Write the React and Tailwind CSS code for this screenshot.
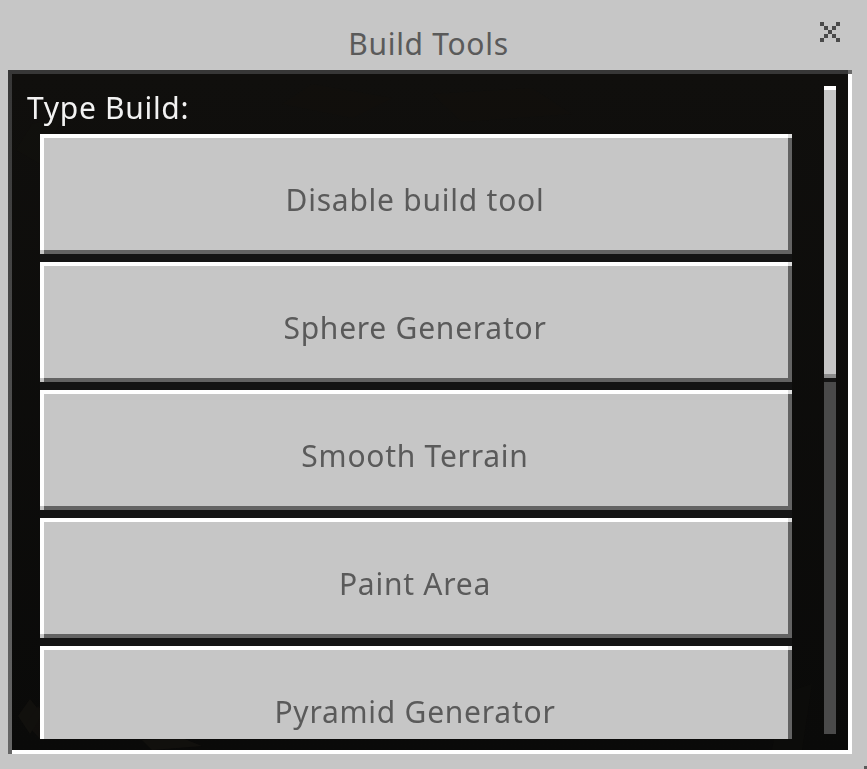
const builds = ["Disable build tool", "Sphere Generator", "Smooth Terrain", "Paint Area", "Pyramid Generator"];

function CloseIcon() {
    const cells = [[0, 0], [4, 0], [1, 1], [3, 1], [2, 2], [1, 3], [3, 3], [0, 4], [4, 4]];
    return (
        <svg width="20" height="20" viewBox="0 0 5 5" shapeRendering="crispEdges" className="block">
            {cells.map(([x, y]) => (
                <rect key={`${x}-${y}`} x={x} y={y} width="1" height="1" fill="#4a4a4a" />
            ))}
        </svg>
    );
}

// faint dirt pattern behind the list
function DirtTexture() {
    return (
        <svg width="836" height="676" viewBox="0 0 836 676" className="absolute inset-0">
            <g fill="#191612" opacity="0.55">
                <polygon points="18,625 30,640 18,660 6,642" />
                <polygon points="34,640 28,665 14,650 26,632" opacity="0.8" />
                <polygon points="130,666 170,664 190,672 140,676" />
                <polygon points="770,620 800,610 790,676 760,676" opacity="0.35" />
                <polygon points="300,10 380,24 340,44 270,30" opacity="0.3" />
                <polygon points="420,20 520,14 560,40 450,48" opacity="0.3" />
                <polygon points="20,50 50,44 28,90 4,76" opacity="0.35" />
            </g>
        </svg>
    );
}

function BuildButton({ label }) {
    return (
        <div className="relative shrink-0 h-[120px] pt-[12px] bg-[#c6c6c6] shadow-[inset_-4px_-4px_0_#636363,inset_4px_4px_0_#ffffff] flex items-center justify-center">
            <span className="pr-[2px] text-[30px] leading-[40px] tracking-[0.75px] text-[#555555] opacity-95">{label}</span>
            <div className="absolute top-0 right-0 w-[4px] h-[4px] bg-[#dedede]"></div>
            <div className="absolute bottom-0 left-0 w-[4px] h-[4px] bg-[#c6c6c6]"></div>
        </div>
    );
}

export default function App() {
    return (
        <div className="w-[867px] h-[769px] relative pt-[22px] pl-[8px] bg-[#c6c6c6] overflow-hidden font-['Noto_Sans',sans-serif]">
            <div className="w-[844px] h-[48px] flex">
                <div className="flex-1 pr-[3px] h-[44px] flex items-center justify-center text-[30px] leading-[44px] tracking-[0.7px] text-[#555555] opacity-95">Build Tools</div>
                <div className="w-[32px] -ml-[32px]"><CloseIcon /></div>
            </div>
            <div className="w-[844px] h-[684px] flex flex-col">
                <div className="h-[4px] shrink-0 flex">
                    <div className="flex-1 bg-[#373737]"></div>
                    <div className="w-[4px] bg-[#6b6b6b]"></div>
                </div>
                <div className="flex-1 flex min-h-0">
                    <div className="w-[4px] bg-gradient-to-b from-[#373737] to-[#666666]"></div>
                    <div className="relative flex-1 flex bg-gradient-to-b from-[#100f0d] to-[#0a0a09]">
                        <DirtTexture />
                        <div className="relative w-[780px] h-[665px] pl-[15px] pt-[12px] flex flex-col overflow-hidden">
                            <div className="shrink-0 h-[48px] text-[30px] leading-[44px] tracking-[0.7px] text-white opacity-95">Type Build:</div>
                            <div className="ml-[13px] flex flex-col gap-[8px] bg-[#141414]">
                                {builds.map((label) => (
                                    <BuildButton key={label} label={label} />
                                ))}
                            </div>
                        </div>
                        <div className="relative ml-[32px] mt-[12px] w-[12px] h-[648px] bg-[#4a4a4a] flex flex-col">
                            <div className="h-[292px] bg-[#c6c6c6] border-t-[4px] border-t-white border-b-[4px] border-b-[#8b8b8b]"></div>
                            <div className="h-[4px] bg-[#141414]"></div>
                        </div>
                    </div>
                    <div className="w-[4px] bg-white"></div>
                </div>
                <div className="h-[4px] shrink-0 flex">
                    <div className="w-[4px] bg-[#666666]"></div>
                    <div className="flex-1 bg-white"></div>
                </div>
            </div>
            <div className="absolute right-0 bottom-0 w-[3px] h-[3px] bg-[#5a5a5a]"></div>
        </div>
    );
}
